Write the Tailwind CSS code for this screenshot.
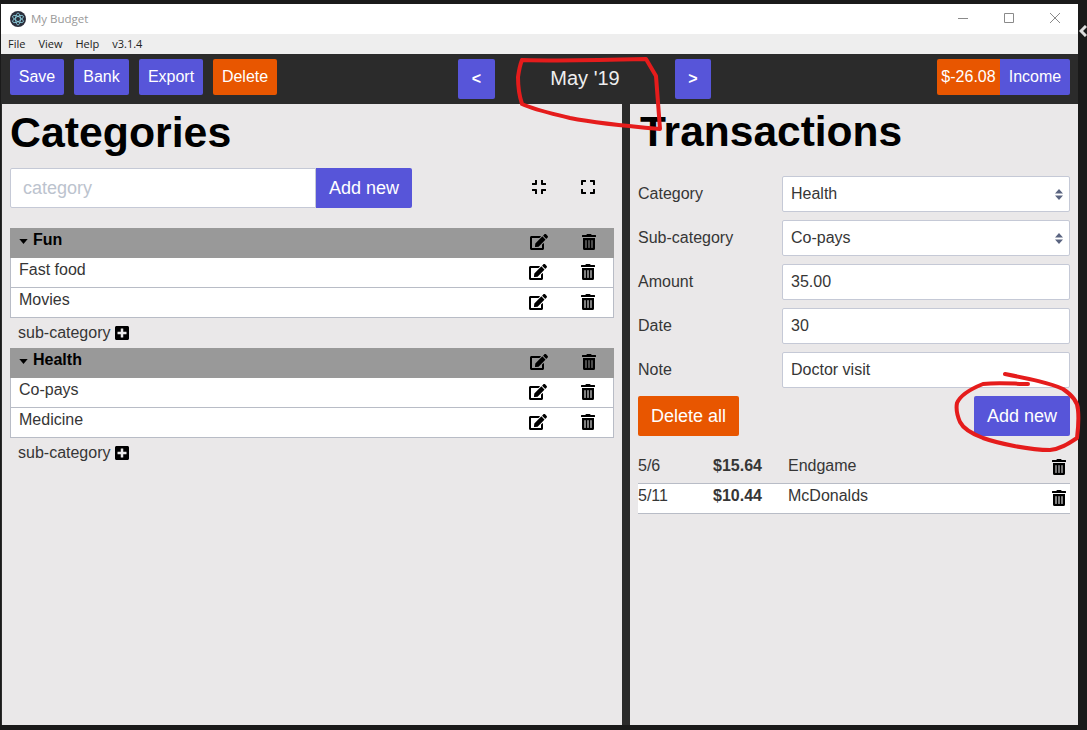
<!DOCTYPE html>
<html lang="en">
<head>
    <meta charset="UTF-8">
    <title>My Budget</title>
    <script src="https://cdn.jsdelivr.net/npm/@tailwindcss/browser@4"></script>
</head>
<body class="bg-[#1a1a1a] h-[730px] w-[1087px] overflow-hidden relative font-['Liberation_Sans',Arial,sans-serif] text-[#363636]">
    <!-- icon sprites -->
    <svg class="hidden">
        <symbol id="edit" viewBox="0 0 576 512"><path d="M402.600 83.200l90.200 90.200c3.800 3.800 3.800 10 0 13.800L274.400 405.600l-92.800 10.300c-12.400 1.400-22.900-9.100-21.500-21.500l10.300-92.800L388.800 83.200c3.800-3.800 10-3.800 13.800 0zm162-22.900l-48.800-48.800c-15.200-15.200-39.900-15.200-55.200 0l-35.400 35.400c-3.800 3.800-3.800 10 0 13.800l90.200 90.200c3.800 3.800 10 3.800 13.800 0l35.400-35.400c15.200-15.300 15.200-40 0-55.200zM384 346.200V448H64V128h229.800c3.200 0 6.200-1.300 8.500-3.500l40-40c7.600-7.600 2.200-20.500-8.500-20.500H48C21.500 64 0 85.500 0 112v352c0 26.500 21.500 48 48 48h352c26.500 0 48-21.500 48-48V306.200c0-10.700-12.900-16-20.500-8.500l-40 40c-2.200 2.300-3.500 5.300-3.500 8.500z"/></symbol>
        <symbol id="trash" viewBox="0 0 448 512"><path d="M32 464a48 48 0 0 0 48 48h288a48 48 0 0 0 48-48V128H32zm272-256a16 16 0 0 1 32 0v224a16 16 0 0 1-32 0zm-96 0a16 16 0 0 1 32 0v224a16 16 0 0 1-32 0zm-96 0a16 16 0 0 1 32 0v224a16 16 0 0 1-32 0zM432 32H312l-9.400-18.700A24 24 0 0 0 281.100 0H166.800a23.720 23.720 0 0 0-21.400 13.300L136 32H16A16 16 0 0 0 0 48v32a16 16 0 0 0 16 16h416a16 16 0 0 0 16-16V48a16 16 0 0 0-16-16z"/></symbol>
        <symbol id="plus" viewBox="0 0 448 512"><path d="M400 32H48C21.500 32 0 53.500 0 80v352c0 26.500 21.500 48 48 48h352c26.500 0 48-21.500 48-48V80c0-26.500-21.500-48-48-48zm-32 252c0 6.600-5.400 12-12 12h-92v92c0 6.600-5.400 12-12 12h-56c-6.600 0-12-5.400-12-12v-92H92c-6.600 0-12-5.400-12-12v-56c0-6.600 5.400-12 12-12h92v-92c0-6.600 5.400-12 12-12h56c6.600 0 12 5.400 12 12v92h92c6.600 0 12 5.400 12 12v56z"/></symbol>
        <symbol id="updown" viewBox="0 0 8 11"><path d="M4 0l4 4.500H0zM4 11L0 6.500h8z" fill="#5a6480"/></symbol>
        <symbol id="caret" viewBox="0 0 10 6"><path d="M0 0h10L5 6z"/></symbol>
    </svg>
    <!-- app window -->
    <div class="ml-px mt-1 w-[1077px] h-[721px] flex flex-col bg-[#2b2b2b]">
        <!-- title bar -->
        <div class="h-[30px] bg-white flex items-center pl-[9px] shrink-0">
            <svg class="w-4 h-4" viewBox="0 0 16 16"><circle cx="8" cy="8" r="8" fill="#2b2e3b"/><g fill="none" stroke="#9feaf9" stroke-width=".7"><ellipse cx="8" cy="8" rx="6" ry="2.400" transform="rotate(30 8 8)"/><ellipse cx="8" cy="8" rx="6" ry="2.400" transform="rotate(-30 8 8)"/><ellipse cx="8" cy="8" rx="6" ry="2.400" transform="rotate(90 8 8)"/></g></svg>
            <span class="ml-[5px] text-[11.5px] text-[#999] font-['Open_Sans',sans-serif]">My Budget</span>
            <div class="ml-auto flex items-center h-full">
                <svg class="w-[46px] h-[30px]" viewBox="0 0 46 30"><path d="M18 14.500h10" stroke="#8a8a8a" fill="none"/></svg>
                <svg class="w-[46px] h-[30px]" viewBox="0 0 46 30"><path d="M18.500 9.500h9v9h-9z" stroke="#8a8a8a" fill="none"/></svg>
                <svg class="w-[46px] h-[30px]" viewBox="0 0 46 30"><path d="M18 9l10 10M28 9l-10 10" stroke="#8a8a8a" fill="none"/></svg>
            </div>
        </div>
        <!-- menu bar -->
        <div class="h-5 bg-[#eeeeee] flex items-center pl-[7px] gap-[13px] text-[11px] text-[#222] font-['Open_Sans',sans-serif] shrink-0">
            <span>File</span><span>View</span><span>Help</span><span>v3.1.4</span>
        </div>
        <!-- toolbar -->
        <div class="h-[50px] flex items-start pt-[5px] relative shrink-0 text-white text-[16px]">
            <div class="flex gap-[10px] pl-[9px]">
                <button class="h-9 w-[54px] rounded-[2px] bg-[#5755d9]">Save</button>
                <button class="h-9 w-[55px] rounded-[2px] bg-[#5755d9]">Bank</button>
                <button class="h-9 w-[64px] rounded-[2px] bg-[#5755d9]">Export</button>
                <button class="h-9 w-[64px] rounded-[2px] bg-[#e85600]">Delete</button>
            </div>
            <div class="absolute left-[457px] top-[5px] flex items-center">
                <button class="h-10 w-[37px] rounded-[2px] bg-[#5755d9] font-bold">&lt;</button>
                <div class="w-[180px] text-center text-[20px] text-[#eee] -mt-[2px]">May '19</div>
                <button class="h-10 w-9 rounded-[2px] bg-[#5755d9] font-bold">&gt;</button>
            </div>
            <div class="ml-auto flex pr-2">
                <div class="h-9 w-[63px] flex items-center justify-center rounded-l-[2px] bg-[#e85600]">$-26.08</div>
                <button class="h-9 w-[70px] rounded-r-[2px] bg-[#5755d9]">Income</button>
            </div>
        </div>
        <!-- panels -->
        <div class="flex-1 flex gap-2 pl-px">
            <!-- categories -->
            <div class="w-[620px] bg-[#eae8e9] px-2">
                <h1 class="text-[42.800px] leading-[52px] font-bold text-black mt-[2px] mb-[-1px]">Categories</h1>
                <div class="flex items-center mt-[11px] h-10">
                    <div class="w-[306px] h-10 bg-white border border-[#c5c9d6] rounded-l-[2px] flex items-center pl-3 text-[18px] text-[#bcc3ce]">category</div>
                    <button class="w-24 h-10 bg-[#5755d9] text-white text-[18px] rounded-r-[2px]">Add new</button>
                    <div class="ml-auto flex items-center pr-[19px] gap-[35px] -mt-[2px]">
                        <svg class="w-[14px] h-4" viewBox="0 0 448 512"><path d="M436 192H312c-13.300 0-24-10.700-24-24V44c0-6.600 5.400-12 12-12h40c6.600 0 12 5.400 12 12v84h84c6.600 0 12 5.400 12 12v40c0 6.600-5.400 12-12 12zm-276-24V44c0-6.600-5.400-12-12-12h-40c-6.600 0-12 5.400-12 12v84H12c-6.600 0-12 5.400-12 12v40c0 6.600 5.400 12 12 12h124c13.300 0 24-10.700 24-24zm0 300V344c0-13.300-10.700-24-24-24H12c-6.600 0-12 5.400-12 12v40c0 6.600 5.400 12 12 12h84v84c0 6.600 5.400 12 12 12h40c6.600 0 12-5.400 12-12zm192 0v-84h84c6.600 0 12-5.400 12-12v-40c0-6.600-5.400-12-12-12H312c-13.300 0-24 10.700-24 24v124c0 6.600 5.400 12 12 12h40c6.600 0 12-5.400 12-12z"/></svg>
                        <svg class="w-[14px] h-4" viewBox="0 0 448 512"><path d="M0 180V56c0-13.300 10.700-24 24-24h124c6.600 0 12 5.400 12 12v40c0 6.600-5.400 12-12 12H64v84c0 6.600-5.400 12-12 12H12c-6.600 0-12-5.400-12-12zm288-136v40c0 6.600 5.400 12 12 12h84v84c0 6.600 5.400 12 12 12h40c6.600 0 12-5.400 12-12V56c0-13.300-10.700-24-24-24H300c-6.600 0-12 5.400-12 12zm148 276h-40c-6.600 0-12 5.400-12 12v84h-84c-6.600 0-12 5.400-12 12v40c0 6.600 5.400 12 12 12h124c13.300 0 24-10.700 24-24V332c0-6.600-5.400-12-12-12zM160 468v-40c0-6.600-5.400-12-12-12H64v-84c0-6.600-5.400-12-12-12H12c-6.600 0-12 5.400-12 12v124c0 13.300 10.700 24 24 24h124c6.600 0 12-5.400 12-12z"/></svg>
                    </div>
                </div>
                <div class="mt-5 text-[16px]">
                    <!-- Fun -->
                    <div class="h-[30px] bg-[#999999] flex items-center pl-[9px] font-bold text-black">
                        <svg class="w-[9px] h-[5px] mr-[5px] -mt-[4px]"><use href="#caret"/></svg>
                        <span class="-mt-[6px]">Fun</span>
                        <svg class="ml-auto w-[18px] h-4 -mt-[2px]"><use href="#edit"/></svg>
                        <svg class="ml-[34px] mr-[18px] w-[14px] h-4 -mt-[2px]"><use href="#trash"/></svg>
                    </div>
                    <div class="bg-white border-x border-b border-[#b8bcc6]">
                        <div class="h-[30px] flex items-center pl-2 border-b border-[#b8bcc6]">
                            <span class="-mt-[6px]">Fast food</span>
                            <svg class="ml-auto w-[18px] h-4 -mt-px"><use href="#edit"/></svg>
                            <svg class="ml-[34px] mr-[18px] w-[14px] h-4 -mt-px"><use href="#trash"/></svg>
                        </div>
                        <div class="h-[29px] flex items-center pl-2">
                            <span class="-mt-[6px]">Movies</span>
                            <svg class="ml-auto w-[18px] h-4 -mt-px"><use href="#edit"/></svg>
                            <svg class="ml-[34px] mr-[18px] w-[14px] h-4 -mt-px"><use href="#trash"/></svg>
                        </div>
                    </div>
                    <div class="h-[30px] flex items-center pl-2 gap-1">
                        <span>sub-category</span>
                        <svg class="w-[14px] h-4 -mt-px"><use href="#plus"/></svg>
                    </div>
                    <!-- Health -->
                    <div class="h-[30px] bg-[#999999] flex items-center pl-[9px] font-bold text-black">
                        <svg class="w-[9px] h-[5px] mr-[5px] -mt-[4px]"><use href="#caret"/></svg>
                        <span class="-mt-[6px]">Health</span>
                        <svg class="ml-auto w-[18px] h-4 -mt-[2px]"><use href="#edit"/></svg>
                        <svg class="ml-[34px] mr-[18px] w-[14px] h-4 -mt-[2px]"><use href="#trash"/></svg>
                    </div>
                    <div class="bg-white border-x border-b border-[#b8bcc6]">
                        <div class="h-[30px] flex items-center pl-2 border-b border-[#b8bcc6]">
                            <span class="-mt-[6px]">Co-pays</span>
                            <svg class="ml-auto w-[18px] h-4 -mt-px"><use href="#edit"/></svg>
                            <svg class="ml-[34px] mr-[18px] w-[14px] h-4 -mt-px"><use href="#trash"/></svg>
                        </div>
                        <div class="h-[29px] flex items-center pl-2">
                            <span class="-mt-[6px]">Medicine</span>
                            <svg class="ml-auto w-[18px] h-4 -mt-px"><use href="#edit"/></svg>
                            <svg class="ml-[34px] mr-[18px] w-[14px] h-4 -mt-px"><use href="#trash"/></svg>
                        </div>
                    </div>
                    <div class="h-[30px] flex items-center pl-2 gap-1">
                        <span>sub-category</span>
                        <svg class="w-[14px] h-4 -mt-px"><use href="#plus"/></svg>
                    </div>
                </div>
            </div>
            <!-- transactions -->
            <div class="flex-1 bg-[#eae8e9] px-2 text-[16px]">
                <h1 class="text-[42.500px] leading-[52px] font-bold text-black mt-[2px] mb-[-1px] pl-[2px]">Transactions</h1>
                <div class="mt-[19px] flex flex-col gap-2">
                    <div class="flex items-center h-9">
                        <label class="w-[144px]">Category</label>
                        <div class="flex-1 h-9 bg-white border border-[#c5c9d6] rounded-[2px] flex items-center justify-between pl-2 pr-[6px]">Health
                            <svg class="w-2 h-[11px]"><use href="#updown"/></svg>
                        </div>
                    </div>
                    <div class="flex items-center h-9">
                        <label class="w-[144px]">Sub-category</label>
                        <div class="flex-1 h-9 bg-white border border-[#c5c9d6] rounded-[2px] flex items-center justify-between pl-2 pr-[6px]">Co-pays
                            <svg class="w-2 h-[11px]"><use href="#updown"/></svg>
                        </div>
                    </div>
                    <div class="flex items-center h-9">
                        <label class="w-[144px]">Amount</label>
                        <div class="flex-1 h-9 bg-white border border-[#c5c9d6] rounded-[2px] flex items-center pl-2">35.00</div>
                    </div>
                    <div class="flex items-center h-9">
                        <label class="w-[144px]">Date</label>
                        <div class="flex-1 h-9 bg-white border border-[#c5c9d6] rounded-[2px] flex items-center pl-2">30</div>
                    </div>
                    <div class="flex items-center h-9">
                        <label class="w-[144px]">Note</label>
                        <div class="flex-1 h-9 bg-white border border-[#c5c9d6] rounded-[2px] flex items-center pl-2">Doctor visit</div>
                    </div>
                </div>
                <div class="flex justify-between mt-2 text-[18px] text-white">
                    <button class="w-[101px] h-10 bg-[#e85600] rounded-[2px]">Delete all</button>
                    <button class="w-24 h-10 bg-[#5755d9] rounded-[2px]">Add new</button>
                </div>
                <div class="mt-[15px]">
                    <div class="h-[33px] flex items-center border-b border-[#b8bcc6]">
                        <span class="w-[75px] -mt-[2px]">5/6</span>
                        <b class="w-[75px] -mt-[2px]">$15.64</b>
                        <span class="-mt-[2px]">Endgame</span>
                        <svg class="ml-auto mr-1 w-[14px] h-4"><use href="#trash"/></svg>
                    </div>
                    <div class="h-[30px] bg-white flex items-center border-b border-[#b8bcc6]">
                        <span class="w-[75px] -mt-[6px]">5/11</span>
                        <b class="w-[75px] -mt-[6px]">$10.44</b>
                        <span class="-mt-[6px]">McDonalds</span>
                        <svg class="ml-auto mr-1 w-[14px] h-4 -mt-[2px]"><use href="#trash"/></svg>
                    </div>
                </div>
            </div>
        </div>
    </div>
    <!-- sliver of another window at the right edge -->
    <svg class="absolute left-[1079px] top-[25px] w-2 h-[12px]" viewBox="0 0 8 12"><path d="M7 1L2 6l5 5" fill="none" stroke="#ddd" stroke-width="3"/></svg>
    <!-- red marker scribbles drawn over the window -->
    <svg class="absolute left-0 top-0 w-[1087px] h-[730px] pointer-events-none" viewBox="0 0 1087 730" fill="none" stroke="#e51c1c" stroke-width="4" stroke-linecap="round" stroke-linejoin="round">
        <path d="M522 60C560 61 610 60 646 59L656 76L660 129C625 126 590 122 570 118C550 113 535 110 522 104C519 95 518 85 518 77C519 70 520 65 522 60"/>
        <path d="M1005 374C1030 379 1050 383 1063 389C1072 395 1078 402 1078 410C1079 420 1078 430 1077 438C1068 444 1060 449 1050 450C1030 450 1000 444 983 438C970 433 963 428 960 422C957 415 956 408 957 403C960 396 968 390 983 384C1000 382 1015 384 1028 384"/>
    </svg>
</body>
</html>
